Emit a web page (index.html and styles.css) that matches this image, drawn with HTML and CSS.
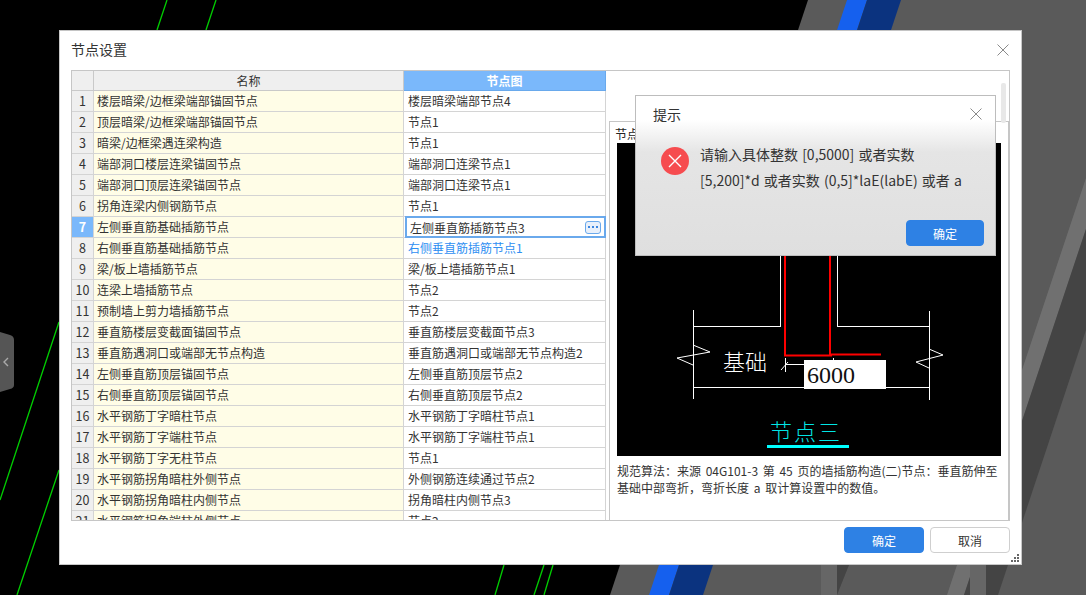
FILE: index.html
```html
<!DOCTYPE html>
<html lang="zh-CN">
<head>
<meta charset="utf-8">
<title>节点设置</title>
<link rel="stylesheet" href="styles.css">
</head>
<body>
<svg class="desktop" viewBox="0 0 1086 595" width="1086" height="595" aria-hidden="true">
  <rect width="1086" height="595" fill="#5a5a5a"/>
  <polygon points="0,0 808,0 610,595 0,595" fill="#000"/>
  <polygon points="847,0 867,0 669,595 649,595" fill="#1560ee"/>
  <polygon points="867,0 901,0 703,595 669,595" fill="#0b337f"/>
  <polygon points="1086,178 1086,229 964,595 947,595 1062,250" fill="#707070"/>
  <polygon points="1086,229 1086,330 998,595 964,595" fill="#444"/>
  <polygon points="837,565 849,565 837,595" fill="#444"/>
  <rect x="821" y="560" width="16" height="35" fill="#666"/>
  <rect x="970" y="560" width="16" height="35" fill="#666"/>
  <g stroke="#00d000" stroke-width="1.3" fill="none">
    <line x1="167" y1="0" x2="157" y2="30"/>
    <line x1="216" y1="0" x2="206" y2="30"/>
    <line x1="59" y1="322" x2="0" y2="500"/>
    <line x1="59" y1="470" x2="17" y2="595"/>
    <line x1="504" y1="565" x2="495" y2="595"/>
    <line x1="544" y1="565" x2="534" y2="595"/>
    <line x1="553" y1="565" x2="544" y2="595"/>
  </g>
  <path d="M0 332 L10 335 Q14 336 14 340 L14 385 Q14 388 10 389 L0 392 Z" fill="#555"/>
  <path d="M8 358 L4 362 L8 366" fill="none" stroke="#aaa" stroke-width="1.4"/>
</svg>

<main class="window">
  <header class="window-title">
    <h1>节点设置</h1>
    <svg class="close" viewBox="0 0 12 12" width="12" height="12" aria-hidden="true"><path d="M0.5 0.5 L11.5 11.5 M11.5 0.5 L0.5 11.5" stroke="#8a8a8a" stroke-width="1" fill="none"/></svg>
  </header>

  <section class="frame">
    <div class="table-wrap">
      <table class="grid">
        <colgroup><col class="c-num"><col class="c-name"><col class="c-node"></colgroup>
        <thead>
          <tr><th></th><th>名称</th><th class="active-head">节点图</th></tr>
        </thead>
        <tbody>
          <tr><th>1</th><td class="name">楼层暗梁/边框梁端部锚固节点</td><td>楼层暗梁端部节点4</td></tr>
          <tr><th>2</th><td class="name">顶层暗梁/边框梁端部锚固节点</td><td>节点1</td></tr>
          <tr><th>3</th><td class="name">暗梁/边框梁遇连梁构造</td><td>节点1</td></tr>
          <tr><th>4</th><td class="name">端部洞口楼层连梁锚固节点</td><td>端部洞口连梁节点1</td></tr>
          <tr><th>5</th><td class="name">端部洞口顶层连梁锚固节点</td><td>端部洞口连梁节点1</td></tr>
          <tr><th>6</th><td class="name">拐角连梁内侧钢筋节点</td><td>节点1</td></tr>
          <tr><th class="active-num">7</th><td class="name">左侧垂直筋基础插筋节点</td><td class="editing"><div class="editor"><span>左侧垂直筋插筋节点3</span><span class="more"><i></i><i></i><i></i></span></div></td></tr>
          <tr><th>8</th><td class="name">右侧垂直筋基础插筋节点</td><td class="changed">右侧垂直筋插筋节点1</td></tr>
          <tr><th>9</th><td class="name">梁/板上墙插筋节点</td><td>梁/板上墙插筋节点1</td></tr>
          <tr><th>10</th><td class="name">连梁上墙插筋节点</td><td>节点2</td></tr>
          <tr><th>11</th><td class="name">预制墙上剪力墙插筋节点</td><td>节点2</td></tr>
          <tr><th>12</th><td class="name">垂直筋楼层变截面锚固节点</td><td>垂直筋楼层变截面节点3</td></tr>
          <tr><th>13</th><td class="name">垂直筋遇洞口或端部无节点构造</td><td>垂直筋遇洞口或端部无节点构造2</td></tr>
          <tr><th>14</th><td class="name">左侧垂直筋顶层锚固节点</td><td>左侧垂直筋顶层节点2</td></tr>
          <tr><th>15</th><td class="name">右侧垂直筋顶层锚固节点</td><td>右侧垂直筋顶层节点2</td></tr>
          <tr><th>16</th><td class="name">水平钢筋丁字暗柱节点</td><td>水平钢筋丁字暗柱节点1</td></tr>
          <tr><th>17</th><td class="name">水平钢筋丁字端柱节点</td><td>水平钢筋丁字端柱节点1</td></tr>
          <tr><th>18</th><td class="name">水平钢筋丁字无柱节点</td><td>节点1</td></tr>
          <tr><th>19</th><td class="name">水平钢筋拐角暗柱外侧节点</td><td>外侧钢筋连续通过节点2</td></tr>
          <tr><th>20</th><td class="name">水平钢筋拐角暗柱内侧节点</td><td>拐角暗柱内侧节点3</td></tr>
          <tr><th>21</th><td class="name">水平钢筋拐角端柱外侧节点</td><td>节点2</td></tr>
        </tbody>
      </table>
    </div>

    <aside class="preview">
      <div class="scrollbar"></div>
      <div class="group">
        <div class="group-title">节点图</div>
        <svg class="drawing" viewBox="617 143 384 313" width="384" height="313" role="img" aria-label="节点三">
          <rect x="617" y="143" width="384" height="313" fill="#000"/>
          <g stroke="#fff" stroke-width="1" fill="none" shape-rendering="crispEdges">
            <path d="M780 143 V326.5 H693.5 M693.5 310 V399 M837.5 143 V326.5 H929.5 M929.5 311 V400 M693.5 387.5 H929.5"/>
            <path d="M785.5 358 V372 M785 364.5 H804 M833.5 358 V361"/>
          </g>
          <g stroke="#fff" stroke-width="1" fill="none">
            <polyline points="693,345 710,352 677,358 693,365"/>
            <polyline points="929,349 943,355 916,362 929,368"/>
            <line x1="781" y1="370" x2="788" y2="362"/>
          </g>
          <g stroke="#f00" stroke-width="2" fill="none">
            <path d="M785 143 V355.5 H832"/>
            <path d="M830 143 V355 M830 354.5 H881"/>
          </g>
          <text class="t-base" x="723" y="370">基础</text>
          <rect x="804" y="360" width="82" height="29" fill="#fff"/>
          <text class="t-dim" x="807" y="383">6000</text>
          <text class="t-node" x="770" y="440">节点三</text>
          <rect x="767" y="445" width="82" height="3" fill="#0ff"/>
        </svg>
        <p class="note">规范算法&#xFF1A;来源 04G101-3 第 45 页的墙插筋构造(二)节点&#xFF1A;垂直筋伸至基础中部弯折&#xFF0C;弯折长度 a 取计算设置中的数值。</p>
      </div>
    </aside>
  </section>

  <footer class="window-actions">
    <button class="btn primary" type="button">确定</button>
    <button class="btn" type="button">取消</button>
  </footer>
  <svg class="grip" viewBox="0 0 9 9" width="9" height="9" aria-hidden="true"><path d="M6 0h2v2H6zM3 3h2v2H3zM6 3h2v2H6zM0 6h2v2H0zM3 6h2v2H3zM6 6h2v2H6z" fill="#666"/></svg>
</main>

<div class="dialog" role="alertdialog">
  <div class="dialog-title">
    <h2>提示</h2>
    <svg class="close" viewBox="0 0 12 12" width="12" height="12" aria-hidden="true"><path d="M0.5 0.5 L11.5 11.5 M11.5 0.5 L0.5 11.5" stroke="#8a8a8a" stroke-width="1" fill="none"/></svg>
  </div>
  <div class="dialog-body">
    <svg class="err" viewBox="0 0 28 28" width="28" height="28" aria-hidden="true"><circle cx="14" cy="14" r="14" fill="#f64c4f"/><path d="M8 8 L20 20 M20 8 L8 20" stroke="#fff" stroke-width="1.4" fill="none"/></svg>
    <p>请输入具体整数 [0,5000] 或者实数<br>[5,200]*d 或者实数 (0,5]*laE(labE) 或者 a</p>
  </div>
  <div class="dialog-actions">
    <button class="btn primary small" type="button">确定</button>
  </div>
</div>
</body>
</html>
```

FILE: styles.css
```css
* { box-sizing: border-box; }
html, body {
  margin: 0;
  width: 1086px;
  height: 595px;
  overflow: hidden;
  background: #000;
  font-family: "Noto Sans CJK SC", "Noto Sans", sans-serif;
  font-size: 12px;
  color: #333;
}
.desktop { position: absolute; left: 0; top: 0; display: block; }

.window {
  position: absolute;
  left: 59px;
  top: 30px;
  width: 963px;
  height: 535px;
  background: #fff;
  border: 1px solid #c8c8c8;
  border-top-color: #c4c4c4;
  display: flex;
  flex-direction: column;
  padding: 0 11px;
}
.window-title {
  height: 39px;
  flex: none;
  display: flex;
  align-items: center;
  justify-content: space-between;
  padding-right: 1px;
}
.window-title h1 {
  margin: -4px 0 0;
  font-size: 14px;
  font-weight: 400;
  line-height: 38px;
  color: #333;
}
.window-title .close { margin-top: -1px; }

.frame {
  height: 451px;
  flex: none;
  border: 1px solid #c6c6c6;
  display: flex;
}
.table-wrap {
  width: 534px;
  flex: none;
  height: 449px;
  overflow: hidden;
}
.grid {
  border-collapse: separate;
  border-spacing: 0;
  table-layout: fixed;
  width: 534px;
}
.c-num { width: 22px; }
.c-name { width: 310px; }
.c-node { width: 202px; }
.grid th, .grid td {
  padding: 0 0 1px;
  height: 21px;
  font-size: 12px;
  font-weight: 400;
  line-height: 19px;
  border-right: 1px solid #d4d4d4;
  border-bottom: 1px solid #d4d4d4;
  white-space: nowrap;
  overflow: hidden;
  vertical-align: middle;
}
.grid thead th {
  height: 20px;
  padding: 0;
  background: #efefef;
  text-align: center;
  border-color: #c9c9c9;
}
.grid tbody th {
  background: #efefef;
  text-align: center;
  font-size: 12.5px;
}
.grid td { padding-left: 4px; background: #fff; }
.grid td.name { padding-left: 3px; background: #fffde7; }
.grid thead th.active-head {
  background: #7ab8fb;
  color: #fff;
  font-weight: 700;
  border-color: #69a9ec;
}
.grid tbody th.active-num {
  background: #7ab8fb;
  color: #fff;
  font-weight: 700;
}
.grid td.changed { color: #2f8ff2; }
.grid td.editing { padding: 0; overflow: visible; }
.editor {
  height: 22px;
  margin: -1px -1px -1px 1px;
  border: 2px solid #6aa9ec;
  display: flex;
  align-items: center;
  justify-content: space-between;
  padding: 0 3px 0 3px;
}
.more {
  width: 16px;
  height: 13px;
  border: 1px solid #6aa9ec;
  border-radius: 3px;
  background: #e8f0fb;
  display: flex;
  align-items: center;
  justify-content: center;
  gap: 2px;
}
.more i {
  width: 2px;
  height: 2px;
  background: #3c86e0;
  display: block;
}

.preview {
  flex: 1;
  position: relative;
  padding: 50px 0 0 3px;
  min-width: 0;
}
.scrollbar {
  position: absolute;
  right: 3px;
  top: 12px;
  width: 5px;
  height: 40px;
  background: #e8e8e8;
  border-radius: 2px;
}
.group {
  height: 399px;
  border: 1px solid #c6c6c6;
  border-bottom: 0;
  margin-right: 0;
  padding: 0 7px;
}
.group-title {
  height: 21px;
  line-height: 24px;
  margin-left: -2px;
  color: #222;
}
.drawing { display: block; }
.t-base {
  font-family: "Noto Sans CJK SC", sans-serif;
  font-size: 22px;
  font-weight: 300;
  fill: #fff;
}
.t-dim {
  font-family: "Liberation Serif", serif;
  font-size: 24px;
  fill: #111;
}
.t-node {
  font-family: "Noto Sans CJK SC", sans-serif;
  font-size: 22px;
  font-weight: 300;
  letter-spacing: 2px;
  fill: #00e5e5;
}
.note {
  margin: 6px -4px 0 0;
  font-size: 12px;
  line-height: 17px;
  word-spacing: 2px;
  color: #333;
}

.window-actions {
  flex: 1;
  display: flex;
  justify-content: flex-end;
  align-items: flex-start;
  gap: 6px;
  padding-top: 6px;
}
.btn {
  width: 80px;
  height: 26px;
  border: 1px solid #cfcfcf;
  border-radius: 4px;
  background: #fff;
  color: #333;
  font: 12px "Noto Sans CJK SC", sans-serif;
  padding: 0;
}
.btn.primary {
  background: #2e81e4;
  border-color: #2e81e4;
  color: #fff;
}
.btn.small { width: 78px; }
.grip { position: absolute; right: 1px; bottom: 1px; }

.dialog {
  position: absolute;
  left: 635px;
  top: 95px;
  width: 361px;
  height: 161px;
  border: 1px solid #bdbdbd;
  background: linear-gradient(#fff 0, #fff 24px, #e5e5e5 56px, #dfdfdf 100%);
  display: flex;
  flex-direction: column;
}
.dialog-title {
  height: 36px;
  flex: none;
  display: flex;
  align-items: center;
  justify-content: space-between;
  padding: 0 13px 0 17px;
}
.dialog-title h2 {
  margin: 0;
  font-size: 14px;
  font-weight: 400;
  color: #333;
}
.dialog-body {
  display: flex;
  padding: 15px 0 0 25px;
  gap: 11px;
  align-items: flex-start;
}
.dialog-body .err { flex: none; }
.dialog-body p {
  margin: -6px 0 0;
  font-size: 14px;
  line-height: 26px;
  word-spacing: 1px;
  white-space: nowrap;
  color: #333;
}
.dialog-actions {
  margin-top: auto;
  display: flex;
  justify-content: flex-end;
  padding: 0 11px 9px 0;
}
```
